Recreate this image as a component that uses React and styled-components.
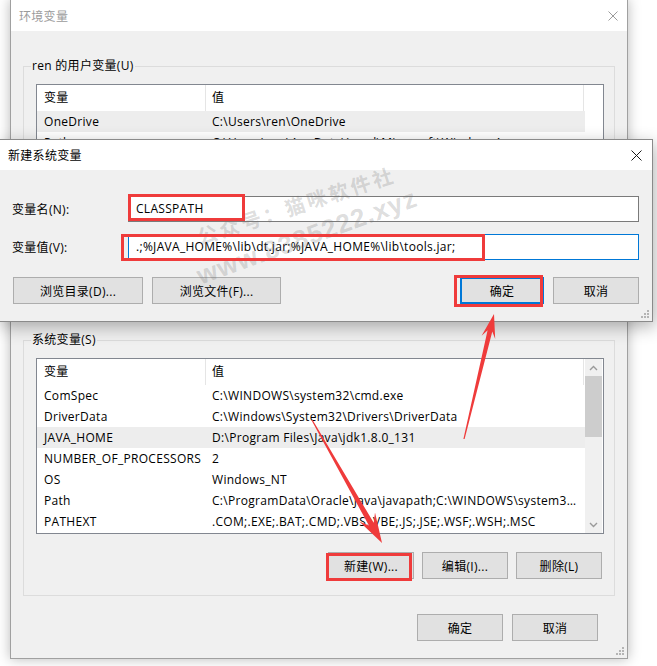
import React from 'react'
import styled, { createGlobalStyle, css } from 'styled-components'

const GlobalStyle = createGlobalStyle`
  html, body {
    margin: 0;
    padding: 0;
    background: #fff;
  }
  body {
    font-family: "Segoe UI", "Open Sans", "Noto Sans CJK SC", sans-serif;
    font-size: 12px;
    letter-spacing: 0.3px;
    color: #000;
  }
`

const Desktop = styled.div`
  position: relative;
  width: 657px;
  height: 666px;
  overflow: hidden;
  background: #fff;
`

// ---- outer window ----
const Window = styled.div`
  position: relative;
  box-sizing: border-box;
  width: 618px;
  margin: -1px 0 0 10px;
  border: 1px solid #a0a0a0;
  background: #f0f0f0;
  box-shadow: 0 0 12px rgba(0, 0, 0, 0.28);
  display: flex;
  flex-direction: column;
`

const TitleBar = styled.div`
  height: ${p => p.$height}px;
  background: #fff;
  display: flex;
  align-items: center;
  justify-content: space-between;
  padding: 0 ${p => p.$padRight}px 0 8px;
  color: ${p => (p.$inactive ? '#9b9b9b' : '#000')};
  font-size: 12px;
`

const WindowBody = styled.div`
  display: flex;
  flex-direction: column;
  padding: 27px 12px 17px;
`

const Group = styled.fieldset`
  box-sizing: border-box;
  margin: 0 0 ${p => p.$gap || 0}px;
  min-width: 0;
  border: 1px solid #dcdcdc;
  padding: 10px 10px 16px 12px;
  ${p => p.$height && css`height: ${p.$height}px;`}
`

const GroupLabel = styled.legend`
  margin-left: -5px;
  padding: 0 1px;
  line-height: 16px;
  font-size: 12px;
`

const ListView = styled.div`
  box-sizing: border-box;
  display: flex;
  height: ${p => p.$height}px;
  border: 1px solid #828790;
  background: #fff;
`

const ListMain = styled.div`
  flex: 1;
  min-width: 0;
  overflow: hidden;
`

const HeaderRow = styled.div`
  display: flex;
  height: 26px;
  line-height: 26px;
`

const HeaderCell = styled.div`
  box-sizing: border-box;
  width: ${p => p.$w}px;
  padding-left: ${p => p.$pad}px;
  border-right: 1px solid #e5e5e5;
`

const Row = styled.div`
  display: flex;
  height: 21px;
  line-height: 21px;
  background: ${p => (p.$selected ? '#ededed' : 'transparent')};
`

const Cell = styled.div`
  box-sizing: border-box;
  width: ${p => p.$w}px;
  padding-left: ${p => p.$pad}px;
  padding-right: 4px;
  white-space: nowrap;
  overflow: hidden;
  text-overflow: ellipsis;
`

const Scrollbar = styled.div`
  width: 17px;
  margin-right: 1px;
  background: ${p => (p.$empty ? '#fff' : '#f0f0f0')};
  display: flex;
  flex-direction: column;
`

const ScrollArrow = styled.div`
  height: 17px;
  display: flex;
  align-items: center;
  justify-content: center;
`

const ScrollThumb = styled.div`
  height: 61px;
  background: #cdcdcd;
`

const ScrollTrack = styled.div`
  flex: 1;
`

const ButtonRow = styled.div`
  display: flex;
  justify-content: flex-end;
  gap: ${p => p.$gap}px;
  margin-top: ${p => p.$top || 0}px;
  padding-right: ${p => p.$right || 0}px;
`

const Button = styled.button`
  box-sizing: border-box;
  width: ${p => p.$w || 86}px;
  height: 27px;
  padding: 0;
  border: 1px solid #adadad;
  background: #e1e1e1;
  font: inherit;
  font-size: 12px;
  letter-spacing: 0.3px;
  color: #000;
  ${p => p.$default && css`
    border: 2px solid #0078d7;
  `}
  ${p => p.$push && css`margin-left: auto;`}
`

const Grip = styled.svg`
  position: absolute;
  right: 3px;
  bottom: 3px;
`

// ---- dialog ----
const Dialog = styled.div`
  position: absolute;
  left: -1px;
  top: 139px;
  width: 654px;
  box-sizing: border-box;
  border: 1px solid #8a8a8a;
  background: #f0f0f0;
  box-shadow: 2px 5px 16px rgba(0, 0, 0, 0.3);
`

const DialogBody = styled.div`
  padding: 26px 13px 17px 12px;
`

const Fields = styled.div`
  display: grid;
  grid-template-columns: 116px 1fr;
  row-gap: 12px;
  align-items: center;
`

const FieldLabel = styled.label`
  font-size: 12px;
`

const TextBox = styled.div`
  box-sizing: border-box;
  height: 26px;
  line-height: 24px;
  padding-left: 7px;
  background: #fff;
  border: 1px solid ${p => (p.$focused ? '#0078d7' : '#7a7a7a')};
  white-space: nowrap;
  overflow: hidden;
`

const DialogButtons = styled.div`
  display: flex;
  gap: 9px;
  margin-top: 17px;
  padding-left: 1px;
`

// ---- annotations ----
const Mark = styled.div`
  position: absolute;
  box-sizing: border-box;
  border: 3px solid #ef3b3b;
  pointer-events: none;
`

const Watermark = styled.div`
  position: absolute;
  left: ${p => p.$x}px;
  top: ${p => p.$y}px;
  transform: translate(-50%, -50%) rotate(${p => p.$angle}deg);
  white-space: nowrap;
  font-family: "Liberation Sans", "Noto Sans CJK SC", sans-serif;
  font-weight: bold;
  font-size: ${p => p.$size}px;
  letter-spacing: ${p => p.$spacing}px;
  color: rgba(110, 110, 110, 0.24);
  pointer-events: none;
`

const Overlay = styled.svg`
  position: absolute;
  left: 0;
  top: 0;
  pointer-events: none;
`

const CloseIcon = ({ size, color }) => (
  <svg width={size} height={size} viewBox={`0 0 ${size} ${size}`}>
    <path d={`M0.5 0.5 L${size - 0.5} ${size - 0.5} M${size - 0.5} 0.5 L0.5 ${size - 0.5}`} stroke={color} strokeWidth="1" fill="none" />
  </svg>
)

const Chevron = ({ up }) => (
  <svg width="9" height="6" viewBox="0 0 9 6">
    <polyline points={up ? '1,5 4.5,1.5 8,5' : '1,1 4.5,4.5 8,1'} stroke="#9a9a9a" strokeWidth="1.4" fill="none" />
  </svg>
)

const GripDots = () => (
  <Grip width="8" height="8" viewBox="0 0 8 8">
    {[[6, 0], [3, 3], [6, 3], [0, 6], [3, 6], [6, 6]].map(([x, y]) => (
      <rect key={`${x}-${y}`} x={x} y={y} width="2" height="2" fill="#b4b4b4" />
    ))}
  </Grip>
)

function arrowPoints([tx, ty], [px, py], headLen, headHalf, tailW, neckW) {
  const len = Math.hypot(px - tx, py - ty)
  const ux = (px - tx) / len
  const uy = (py - ty) / len
  const nx = -uy
  const ny = ux
  const bx = px - ux * headLen
  const by = py - uy * headLen
  const jx = px - ux * headLen * 0.72
  const jy = py - uy * headLen * 0.72
  const pts = [
    [tx + nx * tailW, ty + ny * tailW],
    [jx + nx * neckW, jy + ny * neckW],
    [bx + nx * headHalf, by + ny * headHalf],
    [px, py],
    [bx - nx * headHalf, by - ny * headHalf],
    [jx - nx * neckW, jy - ny * neckW],
    [tx - nx * tailW, ty - ny * tailW],
  ]
  return pts.map(p => p.map(v => v.toFixed(1)).join(',')).join(' ')
}

const userVars = [
  { name: 'OneDrive', value: 'C:\\Users\\ren\\OneDrive', selected: true },
  { name: 'Path', value: 'C:\\Users\\ren\\AppData\\Local\\Microsoft\\WindowsApps;' },
  { name: 'TEMP', value: 'C:\\Users\\ren\\AppData\\Local\\Temp' },
  { name: 'TMP', value: 'C:\\Users\\ren\\AppData\\Local\\Temp' },
]

const systemVars = [
  { name: 'ComSpec', value: 'C:\\WINDOWS\\system32\\cmd.exe' },
  { name: 'DriverData', value: 'C:\\Windows\\System32\\Drivers\\DriverData' },
  { name: 'JAVA_HOME', value: 'D:\\Program Files\\Java\\jdk1.8.0_131', selected: true },
  { name: 'NUMBER_OF_PROCESSORS', value: '2' },
  { name: 'OS', value: 'Windows_NT' },
  { name: 'Path', value: 'C:\\ProgramData\\Oracle\\Java\\javapath;C:\\WINDOWS\\system32;C:\\WINDOWS;C:\\WINDOWS\\System32\\Wbem' },
  { name: 'PATHEXT', value: '.COM;.EXE;.BAT;.CMD;.VBS;.VBE;.JS;.JSE;.WSF;.WSH;.MSC' },
]

const VarList = ({ rows, scroll }) => (
  <ListView $height={176}>
    <ListMain>
      <HeaderRow>
        <HeaderCell $w={169} $pad={7}>变量</HeaderCell>
        <HeaderCell $w={378} $pad={6}>值</HeaderCell>
      </HeaderRow>
      {rows.map(r => (
        <Row key={r.name} $selected={r.selected}>
          <Cell $w={169} $pad={7}>{r.name}</Cell>
          <Cell $w={378} $pad={6}>{r.value}</Cell>
        </Row>
      ))}
    </ListMain>
    {scroll ? (
      <Scrollbar>
        <ScrollArrow><Chevron up /></ScrollArrow>
        <ScrollThumb />
        <ScrollTrack />
        <ScrollArrow><Chevron /></ScrollArrow>
      </Scrollbar>
    ) : (
      <Scrollbar $empty />
    )}
  </ListView>
)

export default function App() {
  return (
    <Desktop>
      <GlobalStyle />

      <Window>
        <TitleBar $height={31} $padRight={9} $inactive>
          <span>环境变量</span>
          <CloseIcon size={10} color="#9b9b9b" />
        </TitleBar>
        <WindowBody>
          <Group $height={262} $gap={12}>
            <GroupLabel>ren 的用户变量(U)</GroupLabel>
            <VarList rows={userVars} />
          </Group>

          <Group>
            <GroupLabel>系统变量(S)</GroupLabel>
            <VarList rows={systemVars} scroll />
            <ButtonRow $gap={8} $top={18} $right={2}>
              <Button>新建(W)...</Button>
              <Button>编辑(I)...</Button>
              <Button>删除(L)</Button>
            </ButtonRow>
          </Group>

          <ButtonRow $gap={9} $top={18} $right={17}>
            <Button>确定</Button>
            <Button>取消</Button>
          </ButtonRow>
        </WindowBody>
        <GripDots />
      </Window>

      <Dialog>
        <TitleBar $height={30} $padRight={10}>
          <span>新建系统变量</span>
          <CloseIcon size={11} color="#1a1a1a" />
        </TitleBar>
        <DialogBody>
          <Fields>
            <FieldLabel>变量名(N):</FieldLabel>
            <TextBox>CLASSPATH</TextBox>
            <FieldLabel>变量值(V):</FieldLabel>
            <TextBox $focused>.;%JAVA_HOME%\lib\dt.jar;%JAVA_HOME%\lib\tools.jar;</TextBox>
          </Fields>
          <DialogButtons>
            <Button $w={130}>浏览目录(D)...</Button>
            <Button $w={129}>浏览文件(F)...</Button>
            <Button $w={84} $default $push>确定</Button>
            <Button $w={86}>取消</Button>
          </DialogButtons>
        </DialogBody>
        <GripDots />
      </Dialog>

      <Watermark $x={296} $y={205} $angle={-18} $size={20} $spacing={3}>公众号：猫咪软件社</Watermark>
      <Watermark $x={307} $y={237} $angle={-20} $size={26} $spacing={1}>www.8385222.xyz</Watermark>

      <Mark style={{ left: 128, top: 194, width: 117, height: 27 }} />
      <Mark style={{ left: 121, top: 234, width: 364, height: 27 }} />
      <Mark style={{ left: 454, top: 275, width: 89, height: 32 }} />
      <Mark style={{ left: 326, top: 553, width: 86, height: 28 }} />

      <Overlay width="657" height="666" viewBox="0 0 657 666">
        <polygon points={arrowPoints([464, 439], [494, 314], 24, 7, 0.6, 2.4)} fill="#ef3b3b" />
        <polygon points={arrowPoints([312, 420], [382, 543], 30, 9, 0.6, 2.8)} fill="#ef3b3b" />
      </Overlay>
    </Desktop>
  )
}
